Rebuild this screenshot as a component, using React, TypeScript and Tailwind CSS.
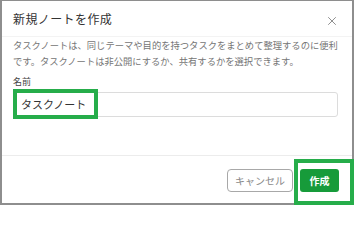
import { X } from "lucide-react";

const font = { fontFamily: '"Noto Sans CJK JP", "Noto Sans", sans-serif' };

export default function App() {
  return (
    <div
      className="relative flex h-[205px] w-[354px] flex-col border-x-2 border-t border-b-2 border-[#8e8e8e] bg-white text-[#333]"
      style={font}
    >
      {/* Header */}
      <div className="flex h-[36px] shrink-0 items-center justify-between border-b border-[#f3f3f3] pl-[11px] pr-[13px]">
        <h2 className="text-[12px] leading-none tracking-[0.4px] text-[#333]">新規ノートを作成</h2>
        <X className="mt-[4px] h-[14px] w-[14px] text-[#777]" strokeWidth={1.4} />
      </div>

      {/* Body */}
      <div className="flex flex-1 flex-col px-[11px]">
        <p className="whitespace-nowrap text-[9.3px] leading-[16px] text-[#757575]">
          タスクノートは、同じテーマや目的を持つタスクをまとめて整理するのに便利
          <br />
          です。タスクノートは非公開にするか、共有するかを選択できます。
        </p>
        <label className="mt-[7px] text-[9px] leading-[12px] text-[#444]">名前</label>
        <div className="relative mt-[4px] mr-[3px] flex h-[25px] items-center rounded-[3px] border border-[#dcdcdc] pl-[7px] text-[11px] text-[#333]">
          タスクノート
          <div className="pointer-events-none absolute left-[-1px] top-[-4px] h-[30px] w-[85px] border-4 border-[#26ad4a]" />
        </div>
      </div>

      {/* Footer */}
      <div className="flex h-[48px] shrink-0 items-start justify-end gap-[7px] border-t border-[#ececec] pr-[13px] pt-[13px]">
        <button className="flex h-[23px] w-[66px] items-center justify-center rounded-[4px] border border-[#a8a8a8] bg-white text-[10px] text-[#888]">
          キャンセル
        </button>
        <button className="flex h-[23px] w-[39px] items-center justify-center rounded-[3px] bg-[#179b3a] text-[10px] font-bold text-white">
          作成
        </button>
      </div>

      {/* Highlight around create button */}
      <div className="pointer-events-none absolute right-[-2px] bottom-[-2px] h-[46px] w-[60px] border-4 border-[#26ad4a]" />
    </div>
  );
}
